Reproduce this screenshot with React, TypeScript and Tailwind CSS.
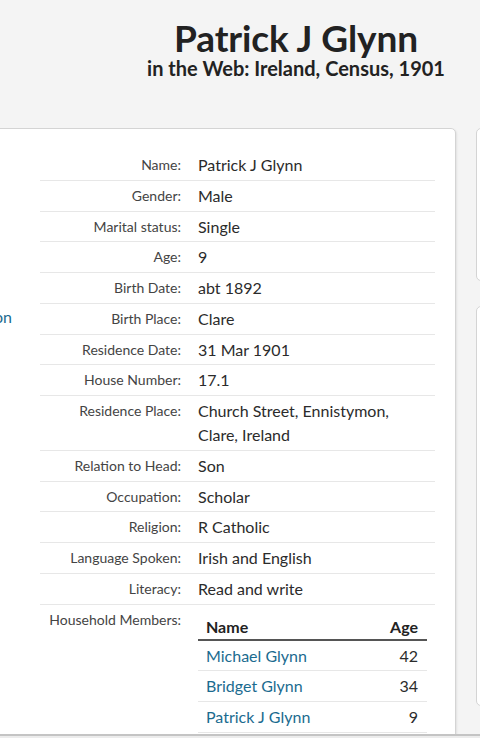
import React from "react";

const rows: { label: string; value: React.ReactNode }[] = [
  { label: "Name:", value: "Patrick J Glynn" },
  { label: "Gender:", value: "Male" },
  { label: "Marital status:", value: "Single" },
  { label: "Age:", value: "9" },
  { label: "Birth Date:", value: "abt 1892" },
  { label: "Birth Place:", value: "Clare" },
  { label: "Residence Date:", value: "31 Mar 1901" },
  { label: "House Number:", value: "17.1" },
  {
    label: "Residence Place:",
    value: (
      <>
        Church Street, Ennistymon,
        <br />
        Clare, Ireland
      </>
    ),
  },
  { label: "Relation to Head:", value: "Son" },
  { label: "Occupation:", value: "Scholar" },
  { label: "Religion:", value: "R Catholic" },
  { label: "Language Spoken:", value: "Irish and English" },
  { label: "Literacy:", value: "Read and write" },
];

const members = [
  { name: "Michael Glynn", age: "42" },
  { name: "Bridget Glynn", age: "34" },
  { name: "Patrick J Glynn", age: "9" },
];

export default function App() {
  return (
    <div className="w-[480px] h-[738px] overflow-hidden bg-[#f4f4f4] text-[#333] font-['Lato','Open_Sans',sans-serif] flex flex-col">
      <header className="h-[128px] shrink-0 pl-[112px] text-center text-[#222]">
        <h1 className="mt-[19px] text-[37px] font-bold leading-[38px] tracking-[-0.1px]">
          Patrick J Glynn
        </h1>
        <h2 className="text-[20px] font-bold leading-[22px]">
          in the Web: Ireland, Census, 1901
        </h2>
      </header>

      <main className="h-[606px] shrink-0 overflow-hidden flex items-start gap-[20px]">
        <section className="ml-[-100px] w-[556px] shrink-0 bg-white border border-[#d4d4d4] rounded-[5px] shadow-[1px_1px_2px_rgba(0,0,0,0.08)] flex pb-10">
          <div className="w-[111px] shrink-0 pt-[176px] text-right text-[16px] leading-[24px]">
            <span className="text-[#1b6b8f] whitespace-nowrap">Citation</span>
          </div>
          <div className="ml-[28px] w-[395px] pt-[21px]">
            {rows.map((r) => (
              <div
                key={r.label}
                className="flex border-b border-[#e7e7e7] pt-[3px] pb-[2.75px] leading-[24px]"
              >
                <div className="w-[141px] shrink-0 text-right text-[14px] text-[#444] whitespace-nowrap">
                  {r.label}
                </div>
                <div className="ml-[17px] text-[16px] text-[#2b2b2b]">{r.value}</div>
              </div>
            ))}
            <div className="flex py-[3px] leading-[24px]">
              <div className="w-[141px] shrink-0 text-right text-[14px] text-[#444] whitespace-nowrap">
                Household Members:
              </div>
              <table className="ml-[17px] w-[229px] text-[16px] border-collapse">
                <thead>
                  <tr className="border-b-2 border-[#555]">
                    <th className="text-left font-bold pl-[8px] pt-[7px] pb-0 text-[#222]">
                      Name
                    </th>
                    <th className="text-right font-bold pr-[9px] pt-[7px] pb-0 text-[#222]">
                      Age
                    </th>
                  </tr>
                </thead>
                <tbody>
                  {members.map((m) => (
                    <tr key={m.name} className="border-b border-[#e7e7e7]">
                      <td className="pl-[8px] pt-[3px] pb-[2.75px] text-[#1b6b8f]">{m.name}</td>
                      <td className="pr-[9px] pt-[3px] pb-[2.75px] text-right text-[#2b2b2b]">{m.age}</td>
                    </tr>
                  ))}
                </tbody>
              </table>
            </div>
          </div>
        </section>

        <aside className="w-[120px] shrink-0 flex flex-col gap-[25px]">
          <div className="h-[153px] bg-white border border-[#d4d4d4] rounded-[5px]" />
          <div className="h-[400px] bg-white border border-[#d4d4d4] rounded-[5px]" />
        </aside>
      </main>

      <footer className="flex-1 border-t-2 border-[#c4c4c4] bg-[#ececec]" />
    </div>
  );
}
